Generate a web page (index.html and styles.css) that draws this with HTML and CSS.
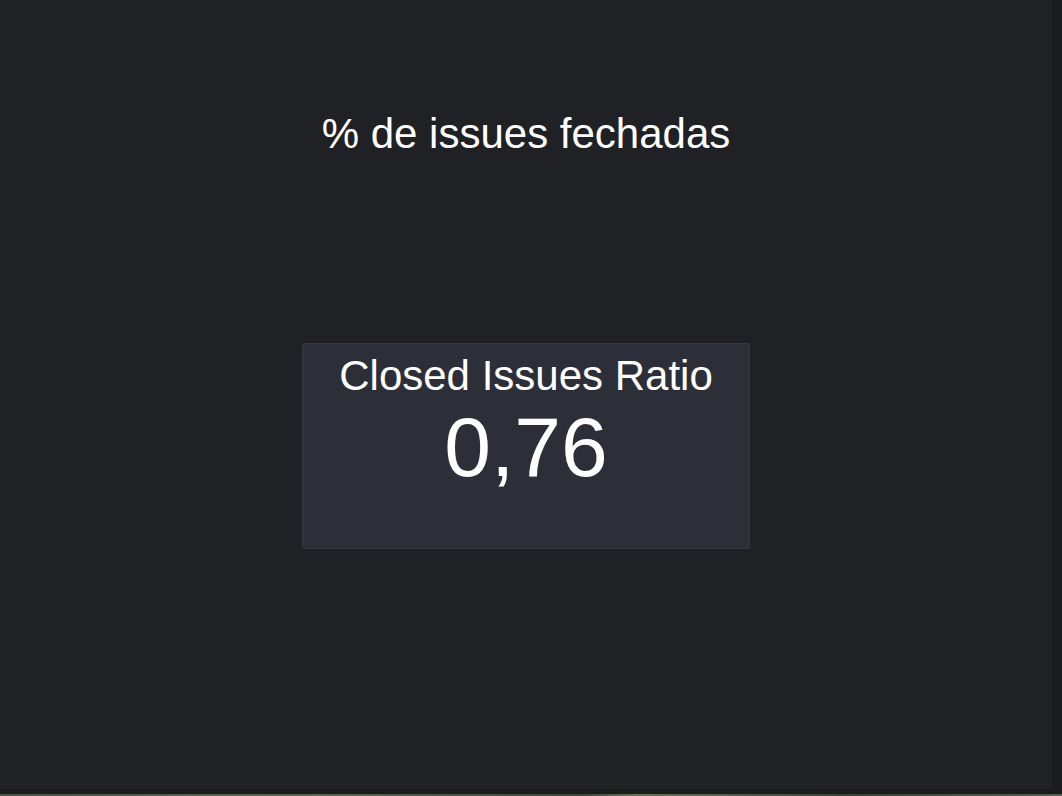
FILE: index.html
```html
<!DOCTYPE html>
<html lang="pt">
<head>
<meta charset="utf-8">
<title>% de issues fechadas</title>
<link rel="stylesheet" href="styles.css">
</head>
<body>
<div class="window">
  <h1 class="page-title">% de issues fechadas</h1>
  <div class="card">
    <div class="card-title">Closed Issues Ratio</div>
    <div class="card-value">0,76</div>
  </div>
</div>
<div class="desktop"></div>
</body>
</html>
```

FILE: styles.css
```css
html, body {
  margin: 0;
  padding: 0;
}
body {
  width: 1062px;
  height: 796px;
  overflow: hidden;
  background: #1b1c1f;
  font-family: "Liberation Sans", Arial, sans-serif;
  color: #ffffff;
  display: flex;
  flex-direction: column;
}
.window {
  width: 1052px;
  height: 789px;
  background: #202125;
  display: flex;
  flex-direction: column;
  align-items: center;
  box-sizing: border-box;
  padding-top: 110px;
}
.page-title {
  margin: 0;
  font-size: 42px;
  font-weight: normal;
  line-height: 48px;
}
.card {
  margin-top: 185px;
  width: 448px;
  height: 206px;
  box-sizing: border-box;
  background: #2c2f38;
  border: 1px solid #363942;
  border-radius: 3px;
  padding-top: 8px;
  display: flex;
  flex-direction: column;
  align-items: center;
}
.card-title {
  font-size: 42px;
  line-height: 48px;
}
.card-value {
  font-size: 84px;
  line-height: 96px;
  margin-top: -1px;
}
.desktop {
  margin-top: auto;
  height: 2px;
  background: linear-gradient(90deg, #4a5540, #5b6648 30%, #3e4636 55%, #6b7252 60%, #3a4232 80%, #55604a);
}
```
